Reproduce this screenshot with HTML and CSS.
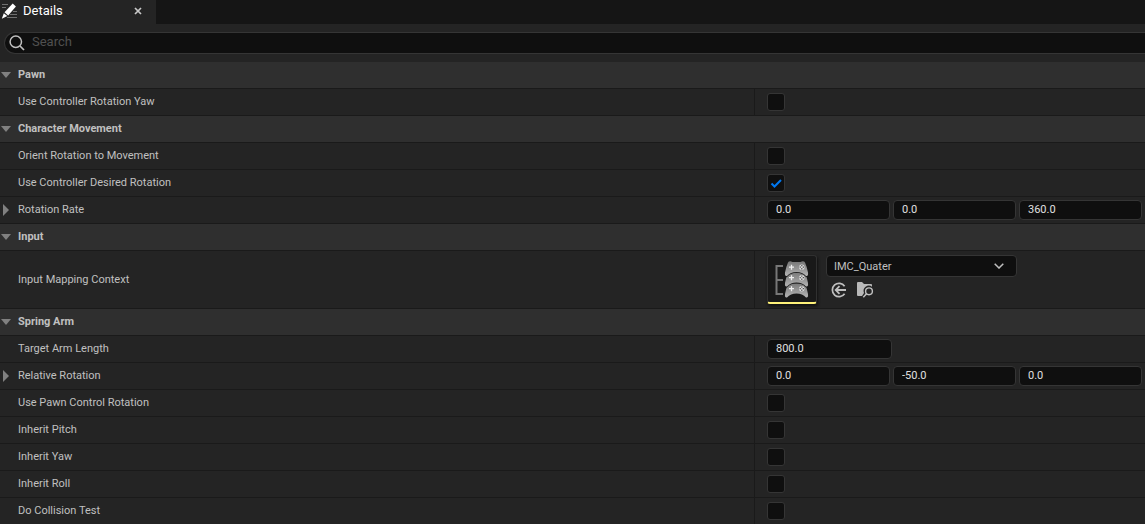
FILE: index.html
```
<!DOCTYPE html>
<html lang="en">
<head>
<meta charset="utf-8">
<title>Details</title>
<link rel="stylesheet" href="styles.css">
</head>
<body>
<div class="panel">
  <header class="tabbar">
    <div class="tab">
      <svg class="tab-icon" viewBox="0 0 16 16" width="16" height="16" aria-hidden="true">
        <path d="M1 1.500h6M1 4.500h4M12 8.500h4M9 11.500h7M6 14.500h10" stroke="#707070" stroke-width="1" fill="none"/>
        <path d="M11.700 .5l3.200 2.900-7.700 9-3.700-3.100z" fill="#fff"/>
        <path d="M2.800 10.200l3.500 2.900-5.500 2.700z" fill="#fff"/>
      </svg>
      <span class="tab-title">Details</span>
      <button class="tab-close" type="button" aria-label="Close tab">
        <svg viewBox="0 0 8 8" width="8" height="8"><path d="M1 1l6 6M7 1l-6 6" stroke="#c8c8c8" stroke-width="1.700"/></svg>
      </button>
    </div>
  </header>

  <div class="search">
    <svg viewBox="0 0 16 16" width="16" height="16" aria-hidden="true"><circle cx="6.800" cy="6.800" r="5.700" fill="none" stroke="#c0c0c0" stroke-width="1.500"/><path d="M11 11l4 4" stroke="#c0c0c0" stroke-width="1.700"/></svg>
    <input class="search-input" type="text" placeholder="Search" aria-label="Search">
  </div>

  <main class="list">
    <h2 class="group"><button class="toggle open" type="button">Pawn</button></h2>
    <div class="row">
      <label class="name" for="yaw">Use Controller Rotation Yaw</label>
      <div class="value"><input class="check" type="checkbox" id="yaw"></div>
    </div>

    <h2 class="group"><button class="toggle open" type="button">Character Movement</button></h2>
    <div class="row">
      <label class="name" for="orient">Orient Rotation to Movement</label>
      <div class="value"><input class="check" type="checkbox" id="orient"></div>
    </div>
    <div class="row">
      <label class="name" for="desired">Use Controller Desired Rotation</label>
      <div class="value"><input class="check" type="checkbox" id="desired" checked></div>
    </div>
    <div class="row">
      <div class="name expandable"><button class="toggle" type="button">Rotation Rate</button></div>
      <div class="value">
        <input class="number" type="text" value="0.0" aria-label="Rotation Rate X">
        <input class="number" type="text" value="0.0" aria-label="Rotation Rate Y">
        <input class="number" type="text" value="360.0" aria-label="Rotation Rate Z">
      </div>
    </div>

    <h2 class="group"><button class="toggle open" type="button">Input</button></h2>
    <div class="row">
      <label class="name" for="mapping">Input Mapping Context</label>
      <div class="value asset">
        <div class="thumb">
          <svg viewBox="0 0 48 46" width="48" height="46" aria-hidden="true">
            <defs>
              <linearGradient id="metal" x1="0" y1="0" x2="0" y2="1"><stop offset="0" stop-color="#777"/><stop offset="1" stop-color="#b4b4b4"/></linearGradient>
              <g id="pad">
                <path d="M3.500 1.500Q4 .3 6 .3L8 1h8L18 .3Q20 .3 20.500 1.500Q22.500 6 23.500 11.500Q24 15.500 21.500 15Q18 11 12 11Q6 11 2.500 15Q0 15.500 .5 11.500Q1.500 6 3.500 1.500Z" fill="url(#metal)" stroke="#1a1a1a" stroke-width="1.600" paint-order="stroke"/>
                <path d="M7 3.700v5M4.500 6.200h5" stroke="#eee" stroke-width="1.300"/>
                <circle cx="17.300" cy="6.200" r="2.700" fill="#ddd"/>
                <path d="M17.300 4v1.300M17.300 7.100v1.300M15.100 6.200h1.300M18.200 6.200h1.300" stroke="#555" stroke-width="1.200"/>
              </g>
            </defs>
            <path d="M15 10H8.500v28H15M8.500 24H15" fill="none" stroke="#777" stroke-width="2"/>
            <use href="#pad" x="16.500" y="26.500"/>
            <use href="#pad" x="16.500" y="15.500"/>
            <use href="#pad" x="16.500" y="5"/>
          </svg>
        </div>
        <div class="picker">
          <select class="combo" id="mapping"><option>IMC_Quater</option></select>
          <div class="actions">
            <button class="icon-button" type="button" aria-label="Use selected asset">
              <svg viewBox="0 0 16 16" width="16" height="16"><path d="M13.600 4.200A6.700 6.700 0 1 0 13.600 11.800" fill="none" stroke="#c0c0c0" stroke-width="1.700"/><path d="M15 8H5M8.500 4.200L4.700 8l3.800 3.800" fill="none" stroke="#c0c0c0" stroke-width="1.800"/></svg>
            </button>
            <button class="icon-button" type="button" aria-label="Browse to asset">
              <svg viewBox="0 0 17 16" width="17" height="16"><path d="M0 1q0-1 1-1h4l2 2h7q1 0 1 1v1.700A5.300 5.300 0 0 0 7 11L5 14H1q-1 0-1-1z" fill="#b8b8b8"/><circle cx="12" cy="9.300" r="3.400" fill="none" stroke="#c0c0c0" stroke-width="1.400"/><path d="M9.500 11.700L6.300 15.300" stroke="#c0c0c0" stroke-width="1.500"/></svg>
            </button>
          </div>
        </div>
      </div>
    </div>

    <h2 class="group"><button class="toggle open" type="button">Spring Arm</button></h2>
    <div class="row">
      <label class="name" for="arm">Target Arm Length</label>
      <div class="value"><input class="number single" type="text" id="arm" value="800.0"></div>
    </div>
    <div class="row">
      <div class="name expandable"><button class="toggle" type="button">Relative Rotation</button></div>
      <div class="value">
        <input class="number" type="text" value="0.0" aria-label="Relative Rotation X">
        <input class="number" type="text" value="-50.0" aria-label="Relative Rotation Y">
        <input class="number" type="text" value="0.0" aria-label="Relative Rotation Z">
      </div>
    </div>
    <div class="row">
      <label class="name" for="pawnctl">Use Pawn Control Rotation</label>
      <div class="value"><input class="check" type="checkbox" id="pawnctl"></div>
    </div>
    <div class="row">
      <label class="name" for="ipitch">Inherit Pitch</label>
      <div class="value"><input class="check" type="checkbox" id="ipitch"></div>
    </div>
    <div class="row">
      <label class="name" for="iyaw">Inherit Yaw</label>
      <div class="value"><input class="check" type="checkbox" id="iyaw"></div>
    </div>
    <div class="row">
      <label class="name" for="iroll">Inherit Roll</label>
      <div class="value"><input class="check" type="checkbox" id="iroll"></div>
    </div>
    <div class="row">
      <label class="name" for="collide">Do Collision Test</label>
      <div class="value"><input class="check" type="checkbox" id="collide"></div>
    </div>
  </main>
</div>
</body>
</html>
```
FILE: styles.css
```
* {
  box-sizing: border-box;
}

body {
  margin: 0;
  background: #242424;
  color: #c0c0c0;
  font: 11px/16px Roboto, "Liberation Sans", sans-serif;
  overflow: hidden;
}

button,
input,
select {
  font: inherit;
  color: inherit;
}

button {
  padding: 0;
  border: 0;
  background: none;
}

svg {
  display: block;
}

.tabbar {
  display: flex;
  height: 24px;
  background: #151515;
}

.tab {
  display: flex;
  align-items: center;
  width: 156px;
  padding: 0 14px 3px 1px;
  background: #242424;
}

.tab-title {
  flex: 1;
  padding-left: 6px;
  font-size: 13px;
  color: #fff;
}

.search {
  display: flex;
  align-items: center;
  gap: 7px;
  height: 22px;
  margin: 8px 0 8px 4px;
  padding-left: 4px;
  border: 1px solid #353535;
  border-right: 0;
  border-radius: 11px 0 0 11px;
  background: #0f0f0f;
}

.search-input {
  flex: 1;
  min-width: 0;
  padding: 0 0 2px;
  border: 0;
  outline: 0;
  background: none;
  font-size: 13px;
}

.search-input::placeholder {
  color: #505050;
}

.group,
.row {
  margin: 0;
  border-bottom: 1px solid #1a1a1a;
}

.group {
  display: flex;
  height: 27px;
  background: #2f2f2f;
  font-size: 11px;
  font-weight: 700;
}

.toggle {
  display: flex;
  align-items: center;
  gap: 5px;
  padding-left: 3px;
}

.toggle::before {
  content: "";
  width: 10px;
  height: 12px;
  background: #808080;
  clip-path: polygon(0 0, 6px 6px, 0 12px);
}

.toggle.open {
  padding-left: 1px;
  gap: 7px;
}

.toggle.open::before {
  height: 6px;
  clip-path: polygon(0 0, 10px 0, 5px 6px);
}

.row {
  display: grid;
  grid-template-columns: 754fr 391fr;
}

.name {
  display: flex;
  align-items: center;
  padding: 0 18px;
}

.name.expandable {
  padding-left: 0;
}

.value {
  display: flex;
  align-items: center;
  gap: 3px;
  min-width: 0;
  min-height: 26px;
  padding: 0 3px 0 12px;
  border-left: 1px solid #1a1a1a;
}

.check {
  appearance: none;
  width: 18px;
  height: 18px;
  margin: 0;
  border: 1px solid #353535;
  border-radius: 3px;
  background: #0f0f0f;
}

.check:checked {
  background: #0f0f0f url("data:image/svg+xml,%3Csvg xmlns='http://www.w3.org/2000/svg' viewBox='0 0 16 16'%3E%3Cpath d='M3.500 8.500l3 3 6.500-6.500' fill='none' stroke='%230078f0' stroke-width='2'/%3E%3C/svg%3E") center / 16px 16px no-repeat;
}

.number {
  flex: 1;
  min-width: 0;
  height: 20px;
  padding: 0 8px 2px;
  border: 1px solid #353535;
  border-radius: 4px;
  background: #0f0f0f;
  color: #e0e0e0;
}

.number.single {
  flex: 0 1 125px;
}

.asset {
  align-items: flex-start;
  gap: 9px;
  padding-top: 4px;
  padding-bottom: 4px;
}

.thumb {
  width: 50px;
  border: 1px solid #303030;
  border-bottom: 2px solid #fff27a;
  border-radius: 3px;
  background: #191919;
  box-shadow: 1px 2px 3px #111;
  overflow: hidden;
}

.picker {
  flex: 0 1 191px;
}

.combo {
  appearance: none;
  display: block;
  width: 100%;
  height: 22px;
  padding: 1px 8px 0 7px;
  border: 1px solid #353535;
  border-radius: 4px;
  background: #0f0f0f url("data:image/svg+xml,%3Csvg xmlns='http://www.w3.org/2000/svg' viewBox='0 0 10 6'%3E%3Cpath d='M.7.7L5 5 9.300.7' fill='none' stroke='%23c0c0c0' stroke-width='1.500'/%3E%3C/svg%3E") right 12px center / 10px 6px no-repeat;
}

.actions {
  display: flex;
  gap: 10px;
  padding: 5px 0 0 5px;
}
```
